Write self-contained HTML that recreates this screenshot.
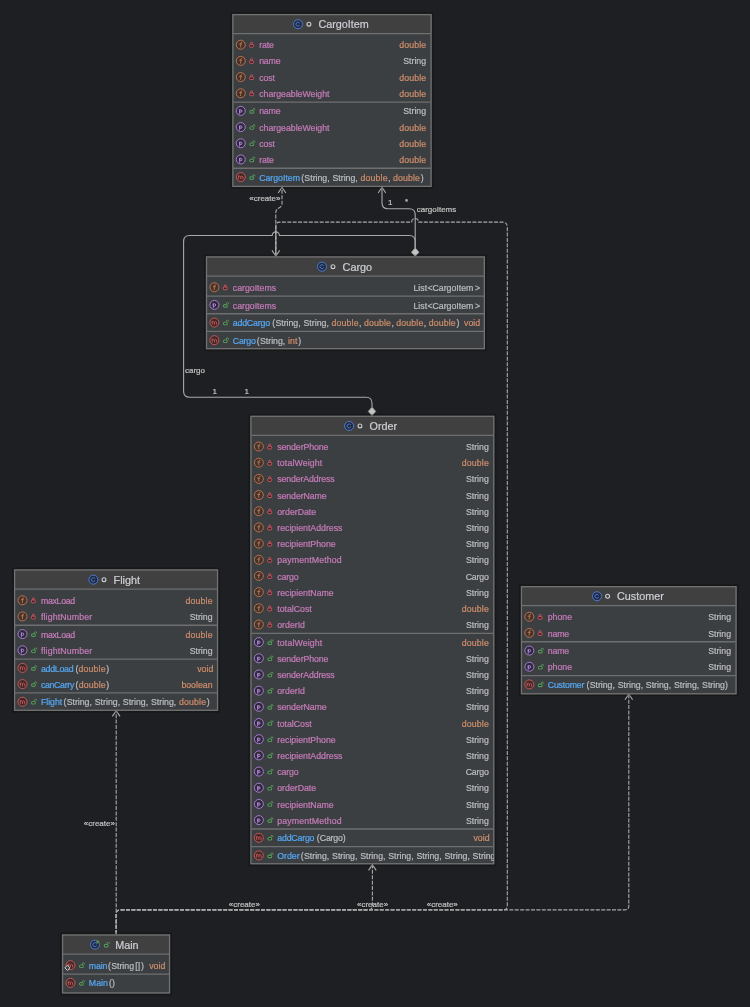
<!DOCTYPE html>
<html><head><meta charset="utf-8"><title>diagram</title>
<style>
html,body{margin:0;padding:0;background:#1e1f22;}
body{width:750px;height:1007px;overflow:hidden;}
svg{display:block;font-family:"Liberation Sans",sans-serif;}
</style></head><body>
<svg width="750" height="1007" viewBox="0 0 750 1007">
<rect width="750" height="1007" fill="#1e1f22"/>
<path d="M116.2,934.2 V711" fill="none" stroke="#a9a9a9" stroke-width="1.1" stroke-dasharray="4 1.4"/>
<path d="M112.40,716.40 L116.20,710.60 L120.00,716.40" fill="none" stroke="#a9a9a9" stroke-width="1.1"/>
<path d="M116.2,934.2 V913.9 Q116.2,909.9 120.2,909.9 H368.4 Q372.4,909.9 372.4,905.9 V865" fill="none" stroke="#a9a9a9" stroke-width="1.1" stroke-dasharray="4 1.4"/>
<path d="M368.60,870.40 L372.40,864.60 L376.20,870.40" fill="none" stroke="#a9a9a9" stroke-width="1.1"/>
<path d="M116.2,934.2 V913.9 Q116.2,909.9 120.2,909.9 H624.8 Q628.8,909.9 628.8,905.9 V694.4" fill="none" stroke="#a9a9a9" stroke-width="1.1" stroke-dasharray="4 1.4"/>
<path d="M625.00,699.80 L628.80,694.00 L632.60,699.80" fill="none" stroke="#a9a9a9" stroke-width="1.1"/>
<path d="M116.2,934.2 V913.9 Q116.2,909.9 120.2,909.9 H503.3 Q507.3,909.9 507.3,905.9 V227.1 Q507.3,222.1 502.3,222.1 H418.8 a3.6,3.6 0 0 0 -7.2,0 H279.8 Q275.8,222.1 275.8,226.1 V256" fill="none" stroke="#a9a9a9" stroke-width="1.1" stroke-dasharray="4 1.4"/>
<path d="M272.00,250.40 L275.80,256.20 L279.60,250.40" fill="none" stroke="#a9a9a9" stroke-width="1.1"/>
<path d="M275.8,226.5 V256" fill="none" stroke="#a9a9a9" stroke-width="1.1"/>
<path d="M275.8,256.2 V212.5 Q275.8,209.5 278.9,208 Q282,206.5 282,203.5 V187.6" fill="none" stroke="#a9a9a9" stroke-width="1.1" stroke-dasharray="4 1.4"/>
<path d="M278.20,193.00 L282.00,187.20 L285.80,193.00" fill="none" stroke="#a9a9a9" stroke-width="1.1"/>
<path d="M415.2,248 V214.7 Q415.2,208.7 409.2,208.7 H388 Q382,208.7 382,202.7 V187.6" fill="none" stroke="#a9a9a9" stroke-width="1.1"/>
<path d="M378.20,193.00 L382.00,187.20 L385.80,193.00" fill="none" stroke="#a9a9a9" stroke-width="1.1"/>
<path d="M372,407 V403.2 Q372,397.2 366,397.2 H189.6 Q183.6,397.2 183.6,391.2 V241.5 Q183.6,235.5 189.6,235.5 H272.2 a3.6,3.6 0 0 1 7.2,0 H409.2 Q415.2,235.5 415.2,241.5 V248" fill="none" stroke="#a9a9a9" stroke-width="1.1"/>
<path d="M415.20,256.40 l3.7,-4.2 l-3.7,-4.2 l-3.7,4.2 z" fill="#c4c4c4" stroke="#a9a9a9" stroke-width="0.8"/>
<path d="M372.00,415.60 l3.7,-4.2 l-3.7,-4.2 l-3.7,4.2 z" fill="#c4c4c4" stroke="#a9a9a9" stroke-width="0.8"/>
<rect x="231.30" y="13.05" width="201.35" height="174.90" fill="none" stroke="#000" stroke-opacity="0.22" stroke-width="1.8"/>
<rect x="232.50" y="14.25" width="198.95" height="172.50" fill="#3c3f41"/>
<rect x="232.50" y="14.25" width="198.95" height="19.35" fill="#404040"/>
<circle cx="298.00" cy="24.20" r="4.5" fill="#222b3f" stroke="#5183ea" stroke-width="0.85"/>
<path d="M299.50,22.90 a2.0,2.0 0 1 0 0,2.6" fill="none" stroke="#5183ea" stroke-width="0.85" stroke-linecap="round" stroke-linejoin="round"/>
<circle cx="308.90" cy="24.20" r="1.95" fill="none" stroke="#ced0d6" stroke-width="1.1"/>
<line x1="233.20" x2="430.75" y1="33.60" y2="33.60" stroke="#6d6f70" stroke-width="1.35"/>
<circle cx="240.75" cy="44.70" r="4.5" fill="#45322b" stroke="#c77d55" stroke-width="0.85"/>
<path d="M241.85,42.40 q-1.2,-0.3 -1.2,0.9 v3.8 M239.55,44.10 h2.1" fill="none" stroke="#c77d55" stroke-width="0.8" stroke-linecap="round" stroke-linejoin="round"/>
<path d="M250.60,44.50 v-1.15 a1,1 0 0 1 2,0 v1.15" fill="none" stroke="#d0555f" stroke-width="0.9"/>
<rect x="249.60" y="44.50" width="4.0" height="2.7" rx="0.9" fill="#35262a" stroke="#d0555f" stroke-width="1.0"/>
<circle cx="240.75" cy="60.88" r="4.5" fill="#45322b" stroke="#c77d55" stroke-width="0.85"/>
<path d="M241.85,58.58 q-1.2,-0.3 -1.2,0.9 v3.8 M239.55,60.28 h2.1" fill="none" stroke="#c77d55" stroke-width="0.8" stroke-linecap="round" stroke-linejoin="round"/>
<path d="M250.60,60.68 v-1.15 a1,1 0 0 1 2,0 v1.15" fill="none" stroke="#d0555f" stroke-width="0.9"/>
<rect x="249.60" y="60.68" width="4.0" height="2.7" rx="0.9" fill="#35262a" stroke="#d0555f" stroke-width="1.0"/>
<circle cx="240.75" cy="77.06" r="4.5" fill="#45322b" stroke="#c77d55" stroke-width="0.85"/>
<path d="M241.85,74.76 q-1.2,-0.3 -1.2,0.9 v3.8 M239.55,76.46 h2.1" fill="none" stroke="#c77d55" stroke-width="0.8" stroke-linecap="round" stroke-linejoin="round"/>
<path d="M250.60,76.86 v-1.15 a1,1 0 0 1 2,0 v1.15" fill="none" stroke="#d0555f" stroke-width="0.9"/>
<rect x="249.60" y="76.86" width="4.0" height="2.7" rx="0.9" fill="#35262a" stroke="#d0555f" stroke-width="1.0"/>
<circle cx="240.75" cy="93.24" r="4.5" fill="#45322b" stroke="#c77d55" stroke-width="0.85"/>
<path d="M241.85,90.94 q-1.2,-0.3 -1.2,0.9 v3.8 M239.55,92.64 h2.1" fill="none" stroke="#c77d55" stroke-width="0.8" stroke-linecap="round" stroke-linejoin="round"/>
<path d="M250.60,93.04 v-1.15 a1,1 0 0 1 2,0 v1.15" fill="none" stroke="#d0555f" stroke-width="0.9"/>
<rect x="249.60" y="93.04" width="4.0" height="2.7" rx="0.9" fill="#35262a" stroke="#d0555f" stroke-width="1.0"/>
<line x1="233.20" x2="430.75" y1="102.09" y2="102.09" stroke="#6d6f70" stroke-width="1.35"/>
<circle cx="240.75" cy="110.89" r="4.5" fill="#2f2936" stroke="#b589ec" stroke-width="0.85"/>
<path d="M239.60,109.59 v4.1 M239.60,110.99 a1.2,1.25 0 1 1 2.4,0 a1.2,1.25 0 1 1 -2.4,0" fill="none" stroke="#b589ec" stroke-width="0.9" stroke-linecap="round" stroke-linejoin="round"/>
<path d="M252.70,110.59 v-0.9 a1.1,1.1 0 0 1 2.2,0 v0.5" fill="none" stroke="#57965c" stroke-width="1.0"/>
<rect x="249.85" y="110.64" width="3.7" height="2.5" rx="1" fill="#25332a" stroke="#57965c" stroke-width="1.1"/>
<circle cx="240.75" cy="127.07" r="4.5" fill="#2f2936" stroke="#b589ec" stroke-width="0.85"/>
<path d="M239.60,125.77 v4.1 M239.60,127.17 a1.2,1.25 0 1 1 2.4,0 a1.2,1.25 0 1 1 -2.4,0" fill="none" stroke="#b589ec" stroke-width="0.9" stroke-linecap="round" stroke-linejoin="round"/>
<path d="M252.70,126.77 v-0.9 a1.1,1.1 0 0 1 2.2,0 v0.5" fill="none" stroke="#57965c" stroke-width="1.0"/>
<rect x="249.85" y="126.82" width="3.7" height="2.5" rx="1" fill="#25332a" stroke="#57965c" stroke-width="1.1"/>
<circle cx="240.75" cy="143.25" r="4.5" fill="#2f2936" stroke="#b589ec" stroke-width="0.85"/>
<path d="M239.60,141.95 v4.1 M239.60,143.35 a1.2,1.25 0 1 1 2.4,0 a1.2,1.25 0 1 1 -2.4,0" fill="none" stroke="#b589ec" stroke-width="0.9" stroke-linecap="round" stroke-linejoin="round"/>
<path d="M252.70,142.95 v-0.9 a1.1,1.1 0 0 1 2.2,0 v0.5" fill="none" stroke="#57965c" stroke-width="1.0"/>
<rect x="249.85" y="143.00" width="3.7" height="2.5" rx="1" fill="#25332a" stroke="#57965c" stroke-width="1.1"/>
<circle cx="240.75" cy="159.43" r="4.5" fill="#2f2936" stroke="#b589ec" stroke-width="0.85"/>
<path d="M239.60,158.13 v4.1 M239.60,159.53 a1.2,1.25 0 1 1 2.4,0 a1.2,1.25 0 1 1 -2.4,0" fill="none" stroke="#b589ec" stroke-width="0.9" stroke-linecap="round" stroke-linejoin="round"/>
<path d="M252.70,159.13 v-0.9 a1.1,1.1 0 0 1 2.2,0 v0.5" fill="none" stroke="#57965c" stroke-width="1.0"/>
<rect x="249.85" y="159.18" width="3.7" height="2.5" rx="1" fill="#25332a" stroke="#57965c" stroke-width="1.1"/>
<line x1="233.20" x2="430.75" y1="168.28" y2="168.28" stroke="#6d6f70" stroke-width="1.35"/>
<circle cx="240.75" cy="177.08" r="4.5" fill="#402929" stroke="#db5c5c" stroke-width="0.85"/>
<path d="M238.55,178.88 v-3.1 M238.55,176.88 q1.1,-1.8 2.2,0 v2.0 M240.75,176.88 q1.1,-1.8 2.2,0 v2.0" fill="none" stroke="#db5c5c" stroke-width="0.8" stroke-linecap="round" stroke-linejoin="round"/>
<path d="M252.70,176.78 v-0.9 a1.1,1.1 0 0 1 2.2,0 v0.5" fill="none" stroke="#57965c" stroke-width="1.0"/>
<rect x="249.85" y="176.83" width="3.7" height="2.5" rx="1" fill="#25332a" stroke="#57965c" stroke-width="1.1"/>
<rect x="232.85" y="14.60" width="198.25" height="171.80" fill="none" stroke="#727272" stroke-width="1.3"/>
<rect x="204.95" y="255.40" width="280.95" height="94.85" fill="none" stroke="#000" stroke-opacity="0.22" stroke-width="1.8"/>
<rect x="206.15" y="256.60" width="278.55" height="92.45" fill="#3c3f41"/>
<rect x="206.15" y="256.60" width="278.55" height="19.55" fill="#404040"/>
<circle cx="322.00" cy="266.65" r="4.5" fill="#222b3f" stroke="#5183ea" stroke-width="0.85"/>
<path d="M323.50,265.35 a2.0,2.0 0 1 0 0,2.6" fill="none" stroke="#5183ea" stroke-width="0.85" stroke-linecap="round" stroke-linejoin="round"/>
<circle cx="333.00" cy="266.65" r="1.95" fill="none" stroke="#ced0d6" stroke-width="1.1"/>
<line x1="206.85" x2="484.00" y1="276.15" y2="276.15" stroke="#6d6f70" stroke-width="1.35"/>
<circle cx="214.40" cy="287.25" r="4.5" fill="#45322b" stroke="#c77d55" stroke-width="0.85"/>
<path d="M215.50,284.95 q-1.2,-0.3 -1.2,0.9 v3.8 M213.20,286.65 h2.1" fill="none" stroke="#c77d55" stroke-width="0.8" stroke-linecap="round" stroke-linejoin="round"/>
<path d="M224.25,287.05 v-1.15 a1,1 0 0 1 2,0 v1.15" fill="none" stroke="#d0555f" stroke-width="0.9"/>
<rect x="223.25" y="287.05" width="4.0" height="2.7" rx="0.9" fill="#35262a" stroke="#d0555f" stroke-width="1.0"/>
<line x1="206.85" x2="484.00" y1="296.10" y2="296.10" stroke="#6d6f70" stroke-width="1.35"/>
<circle cx="214.40" cy="304.90" r="4.5" fill="#2f2936" stroke="#b589ec" stroke-width="0.85"/>
<path d="M213.25,303.60 v4.1 M213.25,305.00 a1.2,1.25 0 1 1 2.4,0 a1.2,1.25 0 1 1 -2.4,0" fill="none" stroke="#b589ec" stroke-width="0.9" stroke-linecap="round" stroke-linejoin="round"/>
<path d="M226.35,304.60 v-0.9 a1.1,1.1 0 0 1 2.2,0 v0.5" fill="none" stroke="#57965c" stroke-width="1.0"/>
<rect x="223.50" y="304.65" width="3.7" height="2.5" rx="1" fill="#25332a" stroke="#57965c" stroke-width="1.1"/>
<line x1="206.85" x2="484.00" y1="313.75" y2="313.75" stroke="#6d6f70" stroke-width="1.35"/>
<circle cx="214.40" cy="322.55" r="4.5" fill="#402929" stroke="#db5c5c" stroke-width="0.85"/>
<path d="M212.20,324.35 v-3.1 M212.20,322.35 q1.1,-1.8 2.2,0 v2.0 M214.40,322.35 q1.1,-1.8 2.2,0 v2.0" fill="none" stroke="#db5c5c" stroke-width="0.8" stroke-linecap="round" stroke-linejoin="round"/>
<path d="M226.35,322.25 v-0.9 a1.1,1.1 0 0 1 2.2,0 v0.5" fill="none" stroke="#57965c" stroke-width="1.0"/>
<rect x="223.50" y="322.30" width="3.7" height="2.5" rx="1" fill="#25332a" stroke="#57965c" stroke-width="1.1"/>
<line x1="206.85" x2="484.00" y1="331.40" y2="331.40" stroke="#6d6f70" stroke-width="1.35"/>
<circle cx="214.40" cy="340.20" r="4.5" fill="#402929" stroke="#db5c5c" stroke-width="0.85"/>
<path d="M212.20,342.00 v-3.1 M212.20,340.00 q1.1,-1.8 2.2,0 v2.0 M214.40,340.00 q1.1,-1.8 2.2,0 v2.0" fill="none" stroke="#db5c5c" stroke-width="0.8" stroke-linecap="round" stroke-linejoin="round"/>
<path d="M226.35,339.90 v-0.9 a1.1,1.1 0 0 1 2.2,0 v0.5" fill="none" stroke="#57965c" stroke-width="1.0"/>
<rect x="223.50" y="339.95" width="3.7" height="2.5" rx="1" fill="#25332a" stroke="#57965c" stroke-width="1.1"/>
<rect x="206.50" y="256.95" width="277.85" height="91.75" fill="none" stroke="#727272" stroke-width="1.3"/>
<rect x="249.40" y="414.75" width="245.95" height="450.55" fill="none" stroke="#000" stroke-opacity="0.22" stroke-width="1.8"/>
<rect x="250.60" y="415.95" width="243.55" height="448.15" fill="#3c3f41"/>
<rect x="250.60" y="415.95" width="243.55" height="19.45" fill="#404040"/>
<circle cx="349.10" cy="425.95" r="4.5" fill="#222b3f" stroke="#5183ea" stroke-width="0.85"/>
<path d="M350.60,424.65 a2.0,2.0 0 1 0 0,2.6" fill="none" stroke="#5183ea" stroke-width="0.85" stroke-linecap="round" stroke-linejoin="round"/>
<circle cx="360.00" cy="425.95" r="1.95" fill="none" stroke="#ced0d6" stroke-width="1.1"/>
<clipPath id="clipOrder"><rect x="250.3" y="415.65" width="243.45" height="448.75"/></clipPath><g clip-path="url(#clipOrder)">
<line x1="251.30" x2="493.45" y1="435.40" y2="435.40" stroke="#6d6f70" stroke-width="1.35"/>
<circle cx="258.85" cy="446.50" r="4.5" fill="#45322b" stroke="#c77d55" stroke-width="0.85"/>
<path d="M259.95,444.20 q-1.2,-0.3 -1.2,0.9 v3.8 M257.65,445.90 h2.1" fill="none" stroke="#c77d55" stroke-width="0.8" stroke-linecap="round" stroke-linejoin="round"/>
<path d="M268.70,446.30 v-1.15 a1,1 0 0 1 2,0 v1.15" fill="none" stroke="#d0555f" stroke-width="0.9"/>
<rect x="267.70" y="446.30" width="4.0" height="2.7" rx="0.9" fill="#35262a" stroke="#d0555f" stroke-width="1.0"/>
<circle cx="258.85" cy="462.68" r="4.5" fill="#45322b" stroke="#c77d55" stroke-width="0.85"/>
<path d="M259.95,460.38 q-1.2,-0.3 -1.2,0.9 v3.8 M257.65,462.08 h2.1" fill="none" stroke="#c77d55" stroke-width="0.8" stroke-linecap="round" stroke-linejoin="round"/>
<path d="M268.70,462.48 v-1.15 a1,1 0 0 1 2,0 v1.15" fill="none" stroke="#d0555f" stroke-width="0.9"/>
<rect x="267.70" y="462.48" width="4.0" height="2.7" rx="0.9" fill="#35262a" stroke="#d0555f" stroke-width="1.0"/>
<circle cx="258.85" cy="478.86" r="4.5" fill="#45322b" stroke="#c77d55" stroke-width="0.85"/>
<path d="M259.95,476.56 q-1.2,-0.3 -1.2,0.9 v3.8 M257.65,478.26 h2.1" fill="none" stroke="#c77d55" stroke-width="0.8" stroke-linecap="round" stroke-linejoin="round"/>
<path d="M268.70,478.66 v-1.15 a1,1 0 0 1 2,0 v1.15" fill="none" stroke="#d0555f" stroke-width="0.9"/>
<rect x="267.70" y="478.66" width="4.0" height="2.7" rx="0.9" fill="#35262a" stroke="#d0555f" stroke-width="1.0"/>
<circle cx="258.85" cy="495.04" r="4.5" fill="#45322b" stroke="#c77d55" stroke-width="0.85"/>
<path d="M259.95,492.74 q-1.2,-0.3 -1.2,0.9 v3.8 M257.65,494.44 h2.1" fill="none" stroke="#c77d55" stroke-width="0.8" stroke-linecap="round" stroke-linejoin="round"/>
<path d="M268.70,494.84 v-1.15 a1,1 0 0 1 2,0 v1.15" fill="none" stroke="#d0555f" stroke-width="0.9"/>
<rect x="267.70" y="494.84" width="4.0" height="2.7" rx="0.9" fill="#35262a" stroke="#d0555f" stroke-width="1.0"/>
<circle cx="258.85" cy="511.22" r="4.5" fill="#45322b" stroke="#c77d55" stroke-width="0.85"/>
<path d="M259.95,508.92 q-1.2,-0.3 -1.2,0.9 v3.8 M257.65,510.62 h2.1" fill="none" stroke="#c77d55" stroke-width="0.8" stroke-linecap="round" stroke-linejoin="round"/>
<path d="M268.70,511.02 v-1.15 a1,1 0 0 1 2,0 v1.15" fill="none" stroke="#d0555f" stroke-width="0.9"/>
<rect x="267.70" y="511.02" width="4.0" height="2.7" rx="0.9" fill="#35262a" stroke="#d0555f" stroke-width="1.0"/>
<circle cx="258.85" cy="527.40" r="4.5" fill="#45322b" stroke="#c77d55" stroke-width="0.85"/>
<path d="M259.95,525.10 q-1.2,-0.3 -1.2,0.9 v3.8 M257.65,526.80 h2.1" fill="none" stroke="#c77d55" stroke-width="0.8" stroke-linecap="round" stroke-linejoin="round"/>
<path d="M268.70,527.20 v-1.15 a1,1 0 0 1 2,0 v1.15" fill="none" stroke="#d0555f" stroke-width="0.9"/>
<rect x="267.70" y="527.20" width="4.0" height="2.7" rx="0.9" fill="#35262a" stroke="#d0555f" stroke-width="1.0"/>
<circle cx="258.85" cy="543.58" r="4.5" fill="#45322b" stroke="#c77d55" stroke-width="0.85"/>
<path d="M259.95,541.28 q-1.2,-0.3 -1.2,0.9 v3.8 M257.65,542.98 h2.1" fill="none" stroke="#c77d55" stroke-width="0.8" stroke-linecap="round" stroke-linejoin="round"/>
<path d="M268.70,543.38 v-1.15 a1,1 0 0 1 2,0 v1.15" fill="none" stroke="#d0555f" stroke-width="0.9"/>
<rect x="267.70" y="543.38" width="4.0" height="2.7" rx="0.9" fill="#35262a" stroke="#d0555f" stroke-width="1.0"/>
<circle cx="258.85" cy="559.76" r="4.5" fill="#45322b" stroke="#c77d55" stroke-width="0.85"/>
<path d="M259.95,557.46 q-1.2,-0.3 -1.2,0.9 v3.8 M257.65,559.16 h2.1" fill="none" stroke="#c77d55" stroke-width="0.8" stroke-linecap="round" stroke-linejoin="round"/>
<path d="M268.70,559.56 v-1.15 a1,1 0 0 1 2,0 v1.15" fill="none" stroke="#d0555f" stroke-width="0.9"/>
<rect x="267.70" y="559.56" width="4.0" height="2.7" rx="0.9" fill="#35262a" stroke="#d0555f" stroke-width="1.0"/>
<circle cx="258.85" cy="575.94" r="4.5" fill="#45322b" stroke="#c77d55" stroke-width="0.85"/>
<path d="M259.95,573.64 q-1.2,-0.3 -1.2,0.9 v3.8 M257.65,575.34 h2.1" fill="none" stroke="#c77d55" stroke-width="0.8" stroke-linecap="round" stroke-linejoin="round"/>
<path d="M268.70,575.74 v-1.15 a1,1 0 0 1 2,0 v1.15" fill="none" stroke="#d0555f" stroke-width="0.9"/>
<rect x="267.70" y="575.74" width="4.0" height="2.7" rx="0.9" fill="#35262a" stroke="#d0555f" stroke-width="1.0"/>
<circle cx="258.85" cy="592.12" r="4.5" fill="#45322b" stroke="#c77d55" stroke-width="0.85"/>
<path d="M259.95,589.82 q-1.2,-0.3 -1.2,0.9 v3.8 M257.65,591.52 h2.1" fill="none" stroke="#c77d55" stroke-width="0.8" stroke-linecap="round" stroke-linejoin="round"/>
<path d="M268.70,591.92 v-1.15 a1,1 0 0 1 2,0 v1.15" fill="none" stroke="#d0555f" stroke-width="0.9"/>
<rect x="267.70" y="591.92" width="4.0" height="2.7" rx="0.9" fill="#35262a" stroke="#d0555f" stroke-width="1.0"/>
<circle cx="258.85" cy="608.30" r="4.5" fill="#45322b" stroke="#c77d55" stroke-width="0.85"/>
<path d="M259.95,606.00 q-1.2,-0.3 -1.2,0.9 v3.8 M257.65,607.70 h2.1" fill="none" stroke="#c77d55" stroke-width="0.8" stroke-linecap="round" stroke-linejoin="round"/>
<path d="M268.70,608.10 v-1.15 a1,1 0 0 1 2,0 v1.15" fill="none" stroke="#d0555f" stroke-width="0.9"/>
<rect x="267.70" y="608.10" width="4.0" height="2.7" rx="0.9" fill="#35262a" stroke="#d0555f" stroke-width="1.0"/>
<circle cx="258.85" cy="624.48" r="4.5" fill="#45322b" stroke="#c77d55" stroke-width="0.85"/>
<path d="M259.95,622.18 q-1.2,-0.3 -1.2,0.9 v3.8 M257.65,623.88 h2.1" fill="none" stroke="#c77d55" stroke-width="0.8" stroke-linecap="round" stroke-linejoin="round"/>
<path d="M268.70,624.28 v-1.15 a1,1 0 0 1 2,0 v1.15" fill="none" stroke="#d0555f" stroke-width="0.9"/>
<rect x="267.70" y="624.28" width="4.0" height="2.7" rx="0.9" fill="#35262a" stroke="#d0555f" stroke-width="1.0"/>
<line x1="251.30" x2="493.45" y1="633.33" y2="633.33" stroke="#6d6f70" stroke-width="1.35"/>
<circle cx="258.85" cy="642.13" r="4.5" fill="#2f2936" stroke="#b589ec" stroke-width="0.85"/>
<path d="M257.70,640.83 v4.1 M257.70,642.23 a1.2,1.25 0 1 1 2.4,0 a1.2,1.25 0 1 1 -2.4,0" fill="none" stroke="#b589ec" stroke-width="0.9" stroke-linecap="round" stroke-linejoin="round"/>
<path d="M270.80,641.83 v-0.9 a1.1,1.1 0 0 1 2.2,0 v0.5" fill="none" stroke="#57965c" stroke-width="1.0"/>
<rect x="267.95" y="641.88" width="3.7" height="2.5" rx="1" fill="#25332a" stroke="#57965c" stroke-width="1.1"/>
<circle cx="258.85" cy="658.31" r="4.5" fill="#2f2936" stroke="#b589ec" stroke-width="0.85"/>
<path d="M257.70,657.01 v4.1 M257.70,658.41 a1.2,1.25 0 1 1 2.4,0 a1.2,1.25 0 1 1 -2.4,0" fill="none" stroke="#b589ec" stroke-width="0.9" stroke-linecap="round" stroke-linejoin="round"/>
<path d="M270.80,658.01 v-0.9 a1.1,1.1 0 0 1 2.2,0 v0.5" fill="none" stroke="#57965c" stroke-width="1.0"/>
<rect x="267.95" y="658.06" width="3.7" height="2.5" rx="1" fill="#25332a" stroke="#57965c" stroke-width="1.1"/>
<circle cx="258.85" cy="674.49" r="4.5" fill="#2f2936" stroke="#b589ec" stroke-width="0.85"/>
<path d="M257.70,673.19 v4.1 M257.70,674.59 a1.2,1.25 0 1 1 2.4,0 a1.2,1.25 0 1 1 -2.4,0" fill="none" stroke="#b589ec" stroke-width="0.9" stroke-linecap="round" stroke-linejoin="round"/>
<path d="M270.80,674.19 v-0.9 a1.1,1.1 0 0 1 2.2,0 v0.5" fill="none" stroke="#57965c" stroke-width="1.0"/>
<rect x="267.95" y="674.24" width="3.7" height="2.5" rx="1" fill="#25332a" stroke="#57965c" stroke-width="1.1"/>
<circle cx="258.85" cy="690.67" r="4.5" fill="#2f2936" stroke="#b589ec" stroke-width="0.85"/>
<path d="M257.70,689.37 v4.1 M257.70,690.77 a1.2,1.25 0 1 1 2.4,0 a1.2,1.25 0 1 1 -2.4,0" fill="none" stroke="#b589ec" stroke-width="0.9" stroke-linecap="round" stroke-linejoin="round"/>
<path d="M270.80,690.37 v-0.9 a1.1,1.1 0 0 1 2.2,0 v0.5" fill="none" stroke="#57965c" stroke-width="1.0"/>
<rect x="267.95" y="690.42" width="3.7" height="2.5" rx="1" fill="#25332a" stroke="#57965c" stroke-width="1.1"/>
<circle cx="258.85" cy="706.85" r="4.5" fill="#2f2936" stroke="#b589ec" stroke-width="0.85"/>
<path d="M257.70,705.55 v4.1 M257.70,706.95 a1.2,1.25 0 1 1 2.4,0 a1.2,1.25 0 1 1 -2.4,0" fill="none" stroke="#b589ec" stroke-width="0.9" stroke-linecap="round" stroke-linejoin="round"/>
<path d="M270.80,706.55 v-0.9 a1.1,1.1 0 0 1 2.2,0 v0.5" fill="none" stroke="#57965c" stroke-width="1.0"/>
<rect x="267.95" y="706.60" width="3.7" height="2.5" rx="1" fill="#25332a" stroke="#57965c" stroke-width="1.1"/>
<circle cx="258.85" cy="723.03" r="4.5" fill="#2f2936" stroke="#b589ec" stroke-width="0.85"/>
<path d="M257.70,721.73 v4.1 M257.70,723.13 a1.2,1.25 0 1 1 2.4,0 a1.2,1.25 0 1 1 -2.4,0" fill="none" stroke="#b589ec" stroke-width="0.9" stroke-linecap="round" stroke-linejoin="round"/>
<path d="M270.80,722.73 v-0.9 a1.1,1.1 0 0 1 2.2,0 v0.5" fill="none" stroke="#57965c" stroke-width="1.0"/>
<rect x="267.95" y="722.78" width="3.7" height="2.5" rx="1" fill="#25332a" stroke="#57965c" stroke-width="1.1"/>
<circle cx="258.85" cy="739.21" r="4.5" fill="#2f2936" stroke="#b589ec" stroke-width="0.85"/>
<path d="M257.70,737.91 v4.1 M257.70,739.31 a1.2,1.25 0 1 1 2.4,0 a1.2,1.25 0 1 1 -2.4,0" fill="none" stroke="#b589ec" stroke-width="0.9" stroke-linecap="round" stroke-linejoin="round"/>
<path d="M270.80,738.91 v-0.9 a1.1,1.1 0 0 1 2.2,0 v0.5" fill="none" stroke="#57965c" stroke-width="1.0"/>
<rect x="267.95" y="738.96" width="3.7" height="2.5" rx="1" fill="#25332a" stroke="#57965c" stroke-width="1.1"/>
<circle cx="258.85" cy="755.39" r="4.5" fill="#2f2936" stroke="#b589ec" stroke-width="0.85"/>
<path d="M257.70,754.09 v4.1 M257.70,755.49 a1.2,1.25 0 1 1 2.4,0 a1.2,1.25 0 1 1 -2.4,0" fill="none" stroke="#b589ec" stroke-width="0.9" stroke-linecap="round" stroke-linejoin="round"/>
<path d="M270.80,755.09 v-0.9 a1.1,1.1 0 0 1 2.2,0 v0.5" fill="none" stroke="#57965c" stroke-width="1.0"/>
<rect x="267.95" y="755.14" width="3.7" height="2.5" rx="1" fill="#25332a" stroke="#57965c" stroke-width="1.1"/>
<circle cx="258.85" cy="771.57" r="4.5" fill="#2f2936" stroke="#b589ec" stroke-width="0.85"/>
<path d="M257.70,770.27 v4.1 M257.70,771.67 a1.2,1.25 0 1 1 2.4,0 a1.2,1.25 0 1 1 -2.4,0" fill="none" stroke="#b589ec" stroke-width="0.9" stroke-linecap="round" stroke-linejoin="round"/>
<path d="M270.80,771.27 v-0.9 a1.1,1.1 0 0 1 2.2,0 v0.5" fill="none" stroke="#57965c" stroke-width="1.0"/>
<rect x="267.95" y="771.32" width="3.7" height="2.5" rx="1" fill="#25332a" stroke="#57965c" stroke-width="1.1"/>
<circle cx="258.85" cy="787.75" r="4.5" fill="#2f2936" stroke="#b589ec" stroke-width="0.85"/>
<path d="M257.70,786.45 v4.1 M257.70,787.85 a1.2,1.25 0 1 1 2.4,0 a1.2,1.25 0 1 1 -2.4,0" fill="none" stroke="#b589ec" stroke-width="0.9" stroke-linecap="round" stroke-linejoin="round"/>
<path d="M270.80,787.45 v-0.9 a1.1,1.1 0 0 1 2.2,0 v0.5" fill="none" stroke="#57965c" stroke-width="1.0"/>
<rect x="267.95" y="787.50" width="3.7" height="2.5" rx="1" fill="#25332a" stroke="#57965c" stroke-width="1.1"/>
<circle cx="258.85" cy="803.93" r="4.5" fill="#2f2936" stroke="#b589ec" stroke-width="0.85"/>
<path d="M257.70,802.63 v4.1 M257.70,804.03 a1.2,1.25 0 1 1 2.4,0 a1.2,1.25 0 1 1 -2.4,0" fill="none" stroke="#b589ec" stroke-width="0.9" stroke-linecap="round" stroke-linejoin="round"/>
<path d="M270.80,803.63 v-0.9 a1.1,1.1 0 0 1 2.2,0 v0.5" fill="none" stroke="#57965c" stroke-width="1.0"/>
<rect x="267.95" y="803.68" width="3.7" height="2.5" rx="1" fill="#25332a" stroke="#57965c" stroke-width="1.1"/>
<circle cx="258.85" cy="820.11" r="4.5" fill="#2f2936" stroke="#b589ec" stroke-width="0.85"/>
<path d="M257.70,818.81 v4.1 M257.70,820.21 a1.2,1.25 0 1 1 2.4,0 a1.2,1.25 0 1 1 -2.4,0" fill="none" stroke="#b589ec" stroke-width="0.9" stroke-linecap="round" stroke-linejoin="round"/>
<path d="M270.80,819.81 v-0.9 a1.1,1.1 0 0 1 2.2,0 v0.5" fill="none" stroke="#57965c" stroke-width="1.0"/>
<rect x="267.95" y="819.86" width="3.7" height="2.5" rx="1" fill="#25332a" stroke="#57965c" stroke-width="1.1"/>
<line x1="251.30" x2="493.45" y1="828.96" y2="828.96" stroke="#6d6f70" stroke-width="1.35"/>
<circle cx="258.85" cy="837.76" r="4.5" fill="#402929" stroke="#db5c5c" stroke-width="0.85"/>
<path d="M256.65,839.56 v-3.1 M256.65,837.56 q1.1,-1.8 2.2,0 v2.0 M258.85,837.56 q1.1,-1.8 2.2,0 v2.0" fill="none" stroke="#db5c5c" stroke-width="0.8" stroke-linecap="round" stroke-linejoin="round"/>
<path d="M270.80,837.46 v-0.9 a1.1,1.1 0 0 1 2.2,0 v0.5" fill="none" stroke="#57965c" stroke-width="1.0"/>
<rect x="267.95" y="837.51" width="3.7" height="2.5" rx="1" fill="#25332a" stroke="#57965c" stroke-width="1.1"/>
<line x1="251.30" x2="493.45" y1="846.61" y2="846.61" stroke="#6d6f70" stroke-width="1.35"/>
<circle cx="258.85" cy="855.41" r="4.5" fill="#402929" stroke="#db5c5c" stroke-width="0.85"/>
<path d="M256.65,857.21 v-3.1 M256.65,855.21 q1.1,-1.8 2.2,0 v2.0 M258.85,855.21 q1.1,-1.8 2.2,0 v2.0" fill="none" stroke="#db5c5c" stroke-width="0.8" stroke-linecap="round" stroke-linejoin="round"/>
<path d="M270.80,855.11 v-0.9 a1.1,1.1 0 0 1 2.2,0 v0.5" fill="none" stroke="#57965c" stroke-width="1.0"/>
<rect x="267.95" y="855.16" width="3.7" height="2.5" rx="1" fill="#25332a" stroke="#57965c" stroke-width="1.1"/>
</g>
<rect x="250.95" y="416.30" width="242.85" height="447.45" fill="none" stroke="#727272" stroke-width="1.3"/>
<rect x="13.05" y="568.40" width="206.05" height="143.45" fill="none" stroke="#000" stroke-opacity="0.22" stroke-width="1.8"/>
<rect x="14.25" y="569.60" width="203.65" height="141.05" fill="#3c3f41"/>
<rect x="14.25" y="569.60" width="203.65" height="19.55" fill="#404040"/>
<circle cx="93.40" cy="579.65" r="4.5" fill="#222b3f" stroke="#5183ea" stroke-width="0.85"/>
<path d="M94.90,578.35 a2.0,2.0 0 1 0 0,2.6" fill="none" stroke="#5183ea" stroke-width="0.85" stroke-linecap="round" stroke-linejoin="round"/>
<circle cx="104.00" cy="579.65" r="1.95" fill="none" stroke="#ced0d6" stroke-width="1.1"/>
<line x1="14.95" x2="217.20" y1="589.15" y2="589.15" stroke="#6d6f70" stroke-width="1.35"/>
<circle cx="22.50" cy="600.25" r="4.5" fill="#45322b" stroke="#c77d55" stroke-width="0.85"/>
<path d="M23.60,597.95 q-1.2,-0.3 -1.2,0.9 v3.8 M21.30,599.65 h2.1" fill="none" stroke="#c77d55" stroke-width="0.8" stroke-linecap="round" stroke-linejoin="round"/>
<path d="M32.35,600.05 v-1.15 a1,1 0 0 1 2,0 v1.15" fill="none" stroke="#d0555f" stroke-width="0.9"/>
<rect x="31.35" y="600.05" width="4.0" height="2.7" rx="0.9" fill="#35262a" stroke="#d0555f" stroke-width="1.0"/>
<circle cx="22.50" cy="616.43" r="4.5" fill="#45322b" stroke="#c77d55" stroke-width="0.85"/>
<path d="M23.60,614.13 q-1.2,-0.3 -1.2,0.9 v3.8 M21.30,615.83 h2.1" fill="none" stroke="#c77d55" stroke-width="0.8" stroke-linecap="round" stroke-linejoin="round"/>
<path d="M32.35,616.23 v-1.15 a1,1 0 0 1 2,0 v1.15" fill="none" stroke="#d0555f" stroke-width="0.9"/>
<rect x="31.35" y="616.23" width="4.0" height="2.7" rx="0.9" fill="#35262a" stroke="#d0555f" stroke-width="1.0"/>
<line x1="14.95" x2="217.20" y1="625.28" y2="625.28" stroke="#6d6f70" stroke-width="1.35"/>
<circle cx="22.50" cy="634.08" r="4.5" fill="#2f2936" stroke="#b589ec" stroke-width="0.85"/>
<path d="M21.35,632.78 v4.1 M21.35,634.18 a1.2,1.25 0 1 1 2.4,0 a1.2,1.25 0 1 1 -2.4,0" fill="none" stroke="#b589ec" stroke-width="0.9" stroke-linecap="round" stroke-linejoin="round"/>
<path d="M34.45,633.78 v-0.9 a1.1,1.1 0 0 1 2.2,0 v0.5" fill="none" stroke="#57965c" stroke-width="1.0"/>
<rect x="31.60" y="633.83" width="3.7" height="2.5" rx="1" fill="#25332a" stroke="#57965c" stroke-width="1.1"/>
<circle cx="22.50" cy="650.26" r="4.5" fill="#2f2936" stroke="#b589ec" stroke-width="0.85"/>
<path d="M21.35,648.96 v4.1 M21.35,650.36 a1.2,1.25 0 1 1 2.4,0 a1.2,1.25 0 1 1 -2.4,0" fill="none" stroke="#b589ec" stroke-width="0.9" stroke-linecap="round" stroke-linejoin="round"/>
<path d="M34.45,649.96 v-0.9 a1.1,1.1 0 0 1 2.2,0 v0.5" fill="none" stroke="#57965c" stroke-width="1.0"/>
<rect x="31.60" y="650.01" width="3.7" height="2.5" rx="1" fill="#25332a" stroke="#57965c" stroke-width="1.1"/>
<line x1="14.95" x2="217.20" y1="659.11" y2="659.11" stroke="#6d6f70" stroke-width="1.35"/>
<circle cx="22.50" cy="667.91" r="4.5" fill="#402929" stroke="#db5c5c" stroke-width="0.85"/>
<path d="M20.30,669.71 v-3.1 M20.30,667.71 q1.1,-1.8 2.2,0 v2.0 M22.50,667.71 q1.1,-1.8 2.2,0 v2.0" fill="none" stroke="#db5c5c" stroke-width="0.8" stroke-linecap="round" stroke-linejoin="round"/>
<path d="M34.45,667.61 v-0.9 a1.1,1.1 0 0 1 2.2,0 v0.5" fill="none" stroke="#57965c" stroke-width="1.0"/>
<rect x="31.60" y="667.66" width="3.7" height="2.5" rx="1" fill="#25332a" stroke="#57965c" stroke-width="1.1"/>
<circle cx="22.50" cy="684.09" r="4.5" fill="#402929" stroke="#db5c5c" stroke-width="0.85"/>
<path d="M20.30,685.89 v-3.1 M20.30,683.89 q1.1,-1.8 2.2,0 v2.0 M22.50,683.89 q1.1,-1.8 2.2,0 v2.0" fill="none" stroke="#db5c5c" stroke-width="0.8" stroke-linecap="round" stroke-linejoin="round"/>
<path d="M34.45,683.79 v-0.9 a1.1,1.1 0 0 1 2.2,0 v0.5" fill="none" stroke="#57965c" stroke-width="1.0"/>
<rect x="31.60" y="683.84" width="3.7" height="2.5" rx="1" fill="#25332a" stroke="#57965c" stroke-width="1.1"/>
<line x1="14.95" x2="217.20" y1="692.94" y2="692.94" stroke="#6d6f70" stroke-width="1.35"/>
<circle cx="22.50" cy="701.74" r="4.5" fill="#402929" stroke="#db5c5c" stroke-width="0.85"/>
<path d="M20.30,703.54 v-3.1 M20.30,701.54 q1.1,-1.8 2.2,0 v2.0 M22.50,701.54 q1.1,-1.8 2.2,0 v2.0" fill="none" stroke="#db5c5c" stroke-width="0.8" stroke-linecap="round" stroke-linejoin="round"/>
<path d="M34.45,701.44 v-0.9 a1.1,1.1 0 0 1 2.2,0 v0.5" fill="none" stroke="#57965c" stroke-width="1.0"/>
<rect x="31.60" y="701.49" width="3.7" height="2.5" rx="1" fill="#25332a" stroke="#57965c" stroke-width="1.1"/>
<rect x="14.60" y="569.95" width="202.95" height="140.35" fill="none" stroke="#727272" stroke-width="1.3"/>
<rect x="519.90" y="585.15" width="217.70" height="110.20" fill="none" stroke="#000" stroke-opacity="0.22" stroke-width="1.8"/>
<rect x="521.10" y="586.35" width="215.30" height="107.80" fill="#3c3f41"/>
<rect x="521.10" y="586.35" width="215.30" height="19.30" fill="#404040"/>
<circle cx="597.00" cy="596.27" r="4.5" fill="#222b3f" stroke="#5183ea" stroke-width="0.85"/>
<path d="M598.50,594.98 a2.0,2.0 0 1 0 0,2.6" fill="none" stroke="#5183ea" stroke-width="0.85" stroke-linecap="round" stroke-linejoin="round"/>
<circle cx="607.60" cy="596.27" r="1.95" fill="none" stroke="#ced0d6" stroke-width="1.1"/>
<line x1="521.80" x2="735.70" y1="605.65" y2="605.65" stroke="#6d6f70" stroke-width="1.35"/>
<circle cx="529.35" cy="616.75" r="4.5" fill="#45322b" stroke="#c77d55" stroke-width="0.85"/>
<path d="M530.45,614.45 q-1.2,-0.3 -1.2,0.9 v3.8 M528.15,616.15 h2.1" fill="none" stroke="#c77d55" stroke-width="0.8" stroke-linecap="round" stroke-linejoin="round"/>
<path d="M539.20,616.55 v-1.15 a1,1 0 0 1 2,0 v1.15" fill="none" stroke="#d0555f" stroke-width="0.9"/>
<rect x="538.20" y="616.55" width="4.0" height="2.7" rx="0.9" fill="#35262a" stroke="#d0555f" stroke-width="1.0"/>
<circle cx="529.35" cy="632.93" r="4.5" fill="#45322b" stroke="#c77d55" stroke-width="0.85"/>
<path d="M530.45,630.63 q-1.2,-0.3 -1.2,0.9 v3.8 M528.15,632.33 h2.1" fill="none" stroke="#c77d55" stroke-width="0.8" stroke-linecap="round" stroke-linejoin="round"/>
<path d="M539.20,632.73 v-1.15 a1,1 0 0 1 2,0 v1.15" fill="none" stroke="#d0555f" stroke-width="0.9"/>
<rect x="538.20" y="632.73" width="4.0" height="2.7" rx="0.9" fill="#35262a" stroke="#d0555f" stroke-width="1.0"/>
<line x1="521.80" x2="735.70" y1="641.78" y2="641.78" stroke="#6d6f70" stroke-width="1.35"/>
<circle cx="529.35" cy="650.58" r="4.5" fill="#2f2936" stroke="#b589ec" stroke-width="0.85"/>
<path d="M528.20,649.28 v4.1 M528.20,650.68 a1.2,1.25 0 1 1 2.4,0 a1.2,1.25 0 1 1 -2.4,0" fill="none" stroke="#b589ec" stroke-width="0.9" stroke-linecap="round" stroke-linejoin="round"/>
<path d="M541.30,650.28 v-0.9 a1.1,1.1 0 0 1 2.2,0 v0.5" fill="none" stroke="#57965c" stroke-width="1.0"/>
<rect x="538.45" y="650.33" width="3.7" height="2.5" rx="1" fill="#25332a" stroke="#57965c" stroke-width="1.1"/>
<circle cx="529.35" cy="666.76" r="4.5" fill="#2f2936" stroke="#b589ec" stroke-width="0.85"/>
<path d="M528.20,665.46 v4.1 M528.20,666.86 a1.2,1.25 0 1 1 2.4,0 a1.2,1.25 0 1 1 -2.4,0" fill="none" stroke="#b589ec" stroke-width="0.9" stroke-linecap="round" stroke-linejoin="round"/>
<path d="M541.30,666.46 v-0.9 a1.1,1.1 0 0 1 2.2,0 v0.5" fill="none" stroke="#57965c" stroke-width="1.0"/>
<rect x="538.45" y="666.51" width="3.7" height="2.5" rx="1" fill="#25332a" stroke="#57965c" stroke-width="1.1"/>
<line x1="521.80" x2="735.70" y1="675.61" y2="675.61" stroke="#6d6f70" stroke-width="1.35"/>
<circle cx="529.35" cy="684.41" r="4.5" fill="#402929" stroke="#db5c5c" stroke-width="0.85"/>
<path d="M527.15,686.21 v-3.1 M527.15,684.21 q1.1,-1.8 2.2,0 v2.0 M529.35,684.21 q1.1,-1.8 2.2,0 v2.0" fill="none" stroke="#db5c5c" stroke-width="0.8" stroke-linecap="round" stroke-linejoin="round"/>
<path d="M541.30,684.11 v-0.9 a1.1,1.1 0 0 1 2.2,0 v0.5" fill="none" stroke="#57965c" stroke-width="1.0"/>
<rect x="538.45" y="684.16" width="3.7" height="2.5" rx="1" fill="#25332a" stroke="#57965c" stroke-width="1.1"/>
<rect x="521.45" y="586.70" width="214.60" height="107.10" fill="none" stroke="#727272" stroke-width="1.3"/>
<rect x="61.00" y="933.45" width="110.10" height="61.05" fill="none" stroke="#000" stroke-opacity="0.22" stroke-width="1.8"/>
<rect x="62.20" y="934.65" width="107.70" height="58.65" fill="#3c3f41"/>
<rect x="62.20" y="934.65" width="107.70" height="19.45" fill="#404040"/>
<circle cx="95.00" cy="944.65" r="4.5" fill="#222b3f" stroke="#5183ea" stroke-width="0.85"/>
<path d="M96.50,943.35 a2.0,2.0 0 1 0 0,2.6" fill="none" stroke="#5183ea" stroke-width="0.85" stroke-linecap="round" stroke-linejoin="round"/>
<path d="M96.20,939.25 l4.2,2.6 l-4.2,2.6 z" fill="#57965c" stroke="#404040" stroke-width="0.6"/>
<path d="M107.20,944.35 v-0.9 a1.1,1.1 0 0 1 2.2,0 v0.5" fill="none" stroke="#57965c" stroke-width="1.0"/>
<rect x="104.35" y="944.40" width="3.7" height="2.5" rx="1" fill="#25332a" stroke="#57965c" stroke-width="1.1"/>
<line x1="62.90" x2="169.20" y1="954.10" y2="954.10" stroke="#6d6f70" stroke-width="1.35"/>
<circle cx="70.45" cy="965.20" r="4.5" fill="#402929" stroke="#db5c5c" stroke-width="0.85"/>
<path d="M68.25,967.00 v-3.1 M68.25,965.00 q1.1,-1.8 2.2,0 v2.0 M70.45,965.00 q1.1,-1.8 2.2,0 v2.0" fill="none" stroke="#db5c5c" stroke-width="0.8" stroke-linecap="round" stroke-linejoin="round"/>
<path d="M67.45,965.60 m0,-0.35 l2.55,2.55 l-2.55,2.55 l-2.55,-2.55 z" fill="#3c3f41" stroke="#d5d7dc" stroke-width="1.0"/>
<path d="M82.40,964.90 v-0.9 a1.1,1.1 0 0 1 2.2,0 v0.5" fill="none" stroke="#57965c" stroke-width="1.0"/>
<rect x="79.55" y="964.95" width="3.7" height="2.5" rx="1" fill="#25332a" stroke="#57965c" stroke-width="1.1"/>
<line x1="62.90" x2="169.20" y1="974.05" y2="974.05" stroke="#6d6f70" stroke-width="1.35"/>
<circle cx="70.45" cy="982.85" r="4.5" fill="#402929" stroke="#db5c5c" stroke-width="0.85"/>
<path d="M68.25,984.65 v-3.1 M68.25,982.65 q1.1,-1.8 2.2,0 v2.0 M70.45,982.65 q1.1,-1.8 2.2,0 v2.0" fill="none" stroke="#db5c5c" stroke-width="0.8" stroke-linecap="round" stroke-linejoin="round"/>
<path d="M82.40,982.55 v-0.9 a1.1,1.1 0 0 1 2.2,0 v0.5" fill="none" stroke="#57965c" stroke-width="1.0"/>
<rect x="79.55" y="982.60" width="3.7" height="2.5" rx="1" fill="#25332a" stroke="#57965c" stroke-width="1.1"/>
<rect x="62.55" y="935.00" width="107.00" height="57.95" fill="none" stroke="#727272" stroke-width="1.3"/>
<g opacity="0.99">
<text x="249.30" y="200.90" font-size="8.0" fill="#c6c6c6" stroke="#c6c6c6" stroke-width="0.2" text-anchor="start">«create»</text>
<text x="83.80" y="825.80" font-size="8.0" fill="#c6c6c6" stroke="#c6c6c6" stroke-width="0.2" text-anchor="start">«create»</text>
<text x="228.80" y="906.80" font-size="8.0" fill="#c6c6c6" stroke="#c6c6c6" stroke-width="0.2" text-anchor="start">«create»</text>
<text x="357.00" y="906.80" font-size="8.0" fill="#c6c6c6" stroke="#c6c6c6" stroke-width="0.2" text-anchor="start">«create»</text>
<text x="426.70" y="906.50" font-size="8.0" fill="#c6c6c6" stroke="#c6c6c6" stroke-width="0.2" text-anchor="start">«create»</text>
<text x="388.00" y="205.20" font-size="8.0" fill="#c6c6c6" stroke="#c6c6c6" stroke-width="0.2" text-anchor="start">1</text>
<text x="405.00" y="204.00" font-size="8.0" fill="#c6c6c6" stroke="#c6c6c6" stroke-width="0.2" text-anchor="start">*</text>
<text x="416.70" y="211.60" font-size="8.0" fill="#c6c6c6" stroke="#c6c6c6" stroke-width="0.2" text-anchor="start">cargoItems</text>
<text x="185.00" y="373.30" font-size="8.0" fill="#c6c6c6" stroke="#c6c6c6" stroke-width="0.2" text-anchor="start">cargo</text>
<text x="212.60" y="394.00" font-size="8.0" fill="#c6c6c6" stroke="#c6c6c6" stroke-width="0.2" text-anchor="start">1</text>
<text x="244.40" y="394.00" font-size="8.0" fill="#c6c6c6" stroke="#c6c6c6" stroke-width="0.2" text-anchor="start">1</text>
<text x="318.40" y="28.10" font-size="10.8" fill="#ced0d6" stroke="#ced0d6" stroke-width="0.22" text-anchor="start">CargoItem</text>
<text x="259.15" y="48.30" font-size="8.76" fill="#c77dbb" stroke="#c77dbb" stroke-width="0.22" text-anchor="start" letter-spacing="-0.125">rate</text>
<text x="426.23" y="48.30" font-size="8.76" fill="#cf8e6d" stroke="#cf8e6d" stroke-width="0.22" text-anchor="end" letter-spacing="0.133">double</text>
<text x="259.15" y="64.48" font-size="8.76" fill="#c77dbb" stroke="#c77dbb" stroke-width="0.22" text-anchor="start" letter-spacing="-0.150">name</text>
<text x="426.10" y="64.48" font-size="8.76" fill="#bcbec4" stroke="#bcbec4" stroke-width="0.22" text-anchor="end">String</text>
<text x="259.15" y="80.66" font-size="8.76" fill="#c77dbb" stroke="#c77dbb" stroke-width="0.22" text-anchor="start" letter-spacing="-0.100">cost</text>
<text x="426.23" y="80.66" font-size="8.76" fill="#cf8e6d" stroke="#cf8e6d" stroke-width="0.22" text-anchor="end" letter-spacing="0.133">double</text>
<text x="259.15" y="96.84" font-size="8.76" fill="#c77dbb" stroke="#c77dbb" stroke-width="0.22" text-anchor="start">chargeableWeight</text>
<text x="426.23" y="96.84" font-size="8.76" fill="#cf8e6d" stroke="#cf8e6d" stroke-width="0.22" text-anchor="end" letter-spacing="0.133">double</text>
<text x="259.15" y="114.49" font-size="8.76" fill="#c77dbb" stroke="#c77dbb" stroke-width="0.22" text-anchor="start" letter-spacing="-0.150">name</text>
<text x="426.10" y="114.49" font-size="8.76" fill="#bcbec4" stroke="#bcbec4" stroke-width="0.22" text-anchor="end">String</text>
<text x="259.15" y="130.67" font-size="8.76" fill="#c77dbb" stroke="#c77dbb" stroke-width="0.22" text-anchor="start">chargeableWeight</text>
<text x="426.23" y="130.67" font-size="8.76" fill="#cf8e6d" stroke="#cf8e6d" stroke-width="0.22" text-anchor="end" letter-spacing="0.133">double</text>
<text x="259.15" y="146.85" font-size="8.76" fill="#c77dbb" stroke="#c77dbb" stroke-width="0.22" text-anchor="start" letter-spacing="-0.100">cost</text>
<text x="426.23" y="146.85" font-size="8.76" fill="#cf8e6d" stroke="#cf8e6d" stroke-width="0.22" text-anchor="end" letter-spacing="0.133">double</text>
<text x="259.15" y="163.03" font-size="8.76" fill="#c77dbb" stroke="#c77dbb" stroke-width="0.22" text-anchor="start" letter-spacing="-0.125">rate</text>
<text x="426.23" y="163.03" font-size="8.76" fill="#cf8e6d" stroke="#cf8e6d" stroke-width="0.22" text-anchor="end" letter-spacing="0.133">double</text>
<text x="259.15" y="180.68" font-size="8.76" fill="#56a8f5" stroke="#56a8f5" stroke-width="0.22" text-anchor="start">CargoItem</text>
<text x="301.25" y="180.68" font-size="8.76" fill="#bcbec4" stroke="#bcbec4" stroke-width="0.22" text-anchor="start">(</text>
<text x="304.36" y="180.68" font-size="8.76" fill="#bcbec4" stroke="#bcbec4" stroke-width="0.22" text-anchor="start">String</text>
<text x="327.25" y="180.68" font-size="8.76" fill="#bcbec4" stroke="#bcbec4" stroke-width="0.22" text-anchor="start">,</text>
<text x="332.47" y="180.68" font-size="8.76" fill="#bcbec4" stroke="#bcbec4" stroke-width="0.22" text-anchor="start">String</text>
<text x="355.35" y="180.68" font-size="8.76" fill="#bcbec4" stroke="#bcbec4" stroke-width="0.22" text-anchor="start">,</text>
<text x="360.58" y="180.68" font-size="8.76" fill="#cf8e6d" stroke="#cf8e6d" stroke-width="0.22" text-anchor="start" letter-spacing="0.133">double</text>
<text x="387.98" y="180.68" font-size="8.76" fill="#bcbec4" stroke="#bcbec4" stroke-width="0.22" text-anchor="start">,</text>
<text x="392.95" y="180.68" font-size="8.76" fill="#cf8e6d" stroke="#cf8e6d" stroke-width="0.22" text-anchor="start" letter-spacing="0.133">double</text>
<text x="420.65" y="180.68" font-size="8.76" fill="#bcbec4" stroke="#bcbec4" stroke-width="0.22" text-anchor="start">)</text>
<text x="342.60" y="270.55" font-size="10.8" fill="#ced0d6" stroke="#ced0d6" stroke-width="0.22" text-anchor="start">Cargo</text>
<text x="232.80" y="290.85" font-size="8.76" fill="#c77dbb" stroke="#c77dbb" stroke-width="0.22" text-anchor="start">cargoItems</text>
<text x="413.50" y="290.85" font-size="8.76" fill="#bcbec4" stroke="#bcbec4" stroke-width="0.22" text-anchor="start">List</text>
<text x="427.50" y="290.85" font-size="8.76" fill="#bcbec4" stroke="#bcbec4" stroke-width="0.22" text-anchor="start">&lt;</text>
<text x="432.50" y="290.85" font-size="8.76" fill="#bcbec4" stroke="#bcbec4" stroke-width="0.22" text-anchor="start">CargoItem</text>
<text x="474.90" y="290.85" font-size="8.76" fill="#bcbec4" stroke="#bcbec4" stroke-width="0.22" text-anchor="start">&gt;</text>
<text x="232.80" y="308.50" font-size="8.76" fill="#c77dbb" stroke="#c77dbb" stroke-width="0.22" text-anchor="start">cargoItems</text>
<text x="413.50" y="308.50" font-size="8.76" fill="#bcbec4" stroke="#bcbec4" stroke-width="0.22" text-anchor="start">List</text>
<text x="427.50" y="308.50" font-size="8.76" fill="#bcbec4" stroke="#bcbec4" stroke-width="0.22" text-anchor="start">&lt;</text>
<text x="432.50" y="308.50" font-size="8.76" fill="#bcbec4" stroke="#bcbec4" stroke-width="0.22" text-anchor="start">CargoItem</text>
<text x="474.90" y="308.50" font-size="8.76" fill="#bcbec4" stroke="#bcbec4" stroke-width="0.22" text-anchor="start">&gt;</text>
<text x="232.80" y="326.15" font-size="8.76" fill="#56a8f5" stroke="#56a8f5" stroke-width="0.22" text-anchor="start" letter-spacing="-0.175">addCargo</text>
<text x="272.28" y="326.15" font-size="8.76" fill="#bcbec4" stroke="#bcbec4" stroke-width="0.22" text-anchor="start">(</text>
<text x="275.39" y="326.15" font-size="8.76" fill="#bcbec4" stroke="#bcbec4" stroke-width="0.22" text-anchor="start">String</text>
<text x="298.28" y="326.15" font-size="8.76" fill="#bcbec4" stroke="#bcbec4" stroke-width="0.22" text-anchor="start">,</text>
<text x="303.50" y="326.15" font-size="8.76" fill="#bcbec4" stroke="#bcbec4" stroke-width="0.22" text-anchor="start">String</text>
<text x="326.38" y="326.15" font-size="8.76" fill="#bcbec4" stroke="#bcbec4" stroke-width="0.22" text-anchor="start">,</text>
<text x="331.61" y="326.15" font-size="8.76" fill="#cf8e6d" stroke="#cf8e6d" stroke-width="0.22" text-anchor="start" letter-spacing="0.133">double</text>
<text x="359.01" y="326.15" font-size="8.76" fill="#bcbec4" stroke="#bcbec4" stroke-width="0.22" text-anchor="start">,</text>
<text x="363.98" y="326.15" font-size="8.76" fill="#cf8e6d" stroke="#cf8e6d" stroke-width="0.22" text-anchor="start" letter-spacing="0.133">double</text>
<text x="391.38" y="326.15" font-size="8.76" fill="#bcbec4" stroke="#bcbec4" stroke-width="0.22" text-anchor="start">,</text>
<text x="396.35" y="326.15" font-size="8.76" fill="#cf8e6d" stroke="#cf8e6d" stroke-width="0.22" text-anchor="start" letter-spacing="0.133">double</text>
<text x="423.75" y="326.15" font-size="8.76" fill="#bcbec4" stroke="#bcbec4" stroke-width="0.22" text-anchor="start">,</text>
<text x="428.72" y="326.15" font-size="8.76" fill="#cf8e6d" stroke="#cf8e6d" stroke-width="0.22" text-anchor="start" letter-spacing="0.133">double</text>
<text x="456.42" y="326.15" font-size="8.76" fill="#bcbec4" stroke="#bcbec4" stroke-width="0.22" text-anchor="start">)</text>
<text x="480.10" y="326.15" font-size="8.76" fill="#cf8e6d" stroke="#cf8e6d" stroke-width="0.22" text-anchor="end">void</text>
<text x="232.80" y="343.80" font-size="8.76" fill="#56a8f5" stroke="#56a8f5" stroke-width="0.22" text-anchor="start" letter-spacing="-0.200">Cargo</text>
<text x="256.86" y="343.80" font-size="8.76" fill="#bcbec4" stroke="#bcbec4" stroke-width="0.22" text-anchor="start">(</text>
<text x="259.98" y="343.80" font-size="8.76" fill="#bcbec4" stroke="#bcbec4" stroke-width="0.22" text-anchor="start">String</text>
<text x="282.86" y="343.80" font-size="8.76" fill="#bcbec4" stroke="#bcbec4" stroke-width="0.22" text-anchor="start">,</text>
<text x="288.08" y="343.80" font-size="8.76" fill="#cf8e6d" stroke="#cf8e6d" stroke-width="0.22" text-anchor="start" letter-spacing="0.100">int</text>
<text x="298.24" y="343.80" font-size="8.76" fill="#bcbec4" stroke="#bcbec4" stroke-width="0.22" text-anchor="start">)</text>
<text x="369.60" y="429.85" font-size="10.8" fill="#ced0d6" stroke="#ced0d6" stroke-width="0.22" text-anchor="start">Order</text>
<g clip-path="url(#clipOrder)">
<text x="277.25" y="450.10" font-size="8.76" fill="#c77dbb" stroke="#c77dbb" stroke-width="0.22" text-anchor="start" letter-spacing="-0.091">senderPhone</text>
<text x="488.80" y="450.10" font-size="8.76" fill="#bcbec4" stroke="#bcbec4" stroke-width="0.22" text-anchor="end">String</text>
<text x="277.25" y="466.28" font-size="8.76" fill="#c77dbb" stroke="#c77dbb" stroke-width="0.22" text-anchor="start" letter-spacing="0.136">totalWeight</text>
<text x="488.93" y="466.28" font-size="8.76" fill="#cf8e6d" stroke="#cf8e6d" stroke-width="0.22" text-anchor="end" letter-spacing="0.133">double</text>
<text x="277.25" y="482.46" font-size="8.76" fill="#c77dbb" stroke="#c77dbb" stroke-width="0.22" text-anchor="start" letter-spacing="-0.115">senderAddress</text>
<text x="488.80" y="482.46" font-size="8.76" fill="#bcbec4" stroke="#bcbec4" stroke-width="0.22" text-anchor="end">String</text>
<text x="277.25" y="498.64" font-size="8.76" fill="#c77dbb" stroke="#c77dbb" stroke-width="0.22" text-anchor="start" letter-spacing="-0.080">senderName</text>
<text x="488.80" y="498.64" font-size="8.76" fill="#bcbec4" stroke="#bcbec4" stroke-width="0.22" text-anchor="end">String</text>
<text x="277.25" y="514.82" font-size="8.76" fill="#c77dbb" stroke="#c77dbb" stroke-width="0.22" text-anchor="start">orderDate</text>
<text x="488.80" y="514.82" font-size="8.76" fill="#bcbec4" stroke="#bcbec4" stroke-width="0.22" text-anchor="end">String</text>
<text x="277.25" y="531.00" font-size="8.76" fill="#c77dbb" stroke="#c77dbb" stroke-width="0.22" text-anchor="start">recipientAddress</text>
<text x="488.80" y="531.00" font-size="8.76" fill="#bcbec4" stroke="#bcbec4" stroke-width="0.22" text-anchor="end">String</text>
<text x="277.25" y="547.18" font-size="8.76" fill="#c77dbb" stroke="#c77dbb" stroke-width="0.22" text-anchor="start">recipientPhone</text>
<text x="488.80" y="547.18" font-size="8.76" fill="#bcbec4" stroke="#bcbec4" stroke-width="0.22" text-anchor="end">String</text>
<text x="277.25" y="563.36" font-size="8.76" fill="#c77dbb" stroke="#c77dbb" stroke-width="0.22" text-anchor="start" letter-spacing="0.131">paymentMethod</text>
<text x="488.80" y="563.36" font-size="8.76" fill="#bcbec4" stroke="#bcbec4" stroke-width="0.22" text-anchor="end">String</text>
<text x="277.25" y="579.54" font-size="8.76" fill="#c77dbb" stroke="#c77dbb" stroke-width="0.22" text-anchor="start" letter-spacing="-0.100">cargo</text>
<text x="488.60" y="579.54" font-size="8.76" fill="#bcbec4" stroke="#bcbec4" stroke-width="0.22" text-anchor="end" letter-spacing="-0.200">Cargo</text>
<text x="277.25" y="595.72" font-size="8.76" fill="#c77dbb" stroke="#c77dbb" stroke-width="0.22" text-anchor="start">recipientName</text>
<text x="488.80" y="595.72" font-size="8.76" fill="#bcbec4" stroke="#bcbec4" stroke-width="0.22" text-anchor="end">String</text>
<text x="277.25" y="611.90" font-size="8.76" fill="#c77dbb" stroke="#c77dbb" stroke-width="0.22" text-anchor="start">totalCost</text>
<text x="488.93" y="611.90" font-size="8.76" fill="#cf8e6d" stroke="#cf8e6d" stroke-width="0.22" text-anchor="end" letter-spacing="0.133">double</text>
<text x="277.25" y="628.08" font-size="8.76" fill="#c77dbb" stroke="#c77dbb" stroke-width="0.22" text-anchor="start">orderId</text>
<text x="488.80" y="628.08" font-size="8.76" fill="#bcbec4" stroke="#bcbec4" stroke-width="0.22" text-anchor="end">String</text>
<text x="277.25" y="645.73" font-size="8.76" fill="#c77dbb" stroke="#c77dbb" stroke-width="0.22" text-anchor="start" letter-spacing="0.136">totalWeight</text>
<text x="488.93" y="645.73" font-size="8.76" fill="#cf8e6d" stroke="#cf8e6d" stroke-width="0.22" text-anchor="end" letter-spacing="0.133">double</text>
<text x="277.25" y="661.91" font-size="8.76" fill="#c77dbb" stroke="#c77dbb" stroke-width="0.22" text-anchor="start" letter-spacing="-0.091">senderPhone</text>
<text x="488.80" y="661.91" font-size="8.76" fill="#bcbec4" stroke="#bcbec4" stroke-width="0.22" text-anchor="end">String</text>
<text x="277.25" y="678.09" font-size="8.76" fill="#c77dbb" stroke="#c77dbb" stroke-width="0.22" text-anchor="start" letter-spacing="-0.115">senderAddress</text>
<text x="488.80" y="678.09" font-size="8.76" fill="#bcbec4" stroke="#bcbec4" stroke-width="0.22" text-anchor="end">String</text>
<text x="277.25" y="694.27" font-size="8.76" fill="#c77dbb" stroke="#c77dbb" stroke-width="0.22" text-anchor="start">orderId</text>
<text x="488.80" y="694.27" font-size="8.76" fill="#bcbec4" stroke="#bcbec4" stroke-width="0.22" text-anchor="end">String</text>
<text x="277.25" y="710.45" font-size="8.76" fill="#c77dbb" stroke="#c77dbb" stroke-width="0.22" text-anchor="start" letter-spacing="-0.080">senderName</text>
<text x="488.80" y="710.45" font-size="8.76" fill="#bcbec4" stroke="#bcbec4" stroke-width="0.22" text-anchor="end">String</text>
<text x="277.25" y="726.63" font-size="8.76" fill="#c77dbb" stroke="#c77dbb" stroke-width="0.22" text-anchor="start">totalCost</text>
<text x="488.93" y="726.63" font-size="8.76" fill="#cf8e6d" stroke="#cf8e6d" stroke-width="0.22" text-anchor="end" letter-spacing="0.133">double</text>
<text x="277.25" y="742.81" font-size="8.76" fill="#c77dbb" stroke="#c77dbb" stroke-width="0.22" text-anchor="start">recipientPhone</text>
<text x="488.80" y="742.81" font-size="8.76" fill="#bcbec4" stroke="#bcbec4" stroke-width="0.22" text-anchor="end">String</text>
<text x="277.25" y="758.99" font-size="8.76" fill="#c77dbb" stroke="#c77dbb" stroke-width="0.22" text-anchor="start">recipientAddress</text>
<text x="488.80" y="758.99" font-size="8.76" fill="#bcbec4" stroke="#bcbec4" stroke-width="0.22" text-anchor="end">String</text>
<text x="277.25" y="775.17" font-size="8.76" fill="#c77dbb" stroke="#c77dbb" stroke-width="0.22" text-anchor="start" letter-spacing="-0.100">cargo</text>
<text x="488.60" y="775.17" font-size="8.76" fill="#bcbec4" stroke="#bcbec4" stroke-width="0.22" text-anchor="end" letter-spacing="-0.200">Cargo</text>
<text x="277.25" y="791.35" font-size="8.76" fill="#c77dbb" stroke="#c77dbb" stroke-width="0.22" text-anchor="start">orderDate</text>
<text x="488.80" y="791.35" font-size="8.76" fill="#bcbec4" stroke="#bcbec4" stroke-width="0.22" text-anchor="end">String</text>
<text x="277.25" y="807.53" font-size="8.76" fill="#c77dbb" stroke="#c77dbb" stroke-width="0.22" text-anchor="start">recipientName</text>
<text x="488.80" y="807.53" font-size="8.76" fill="#bcbec4" stroke="#bcbec4" stroke-width="0.22" text-anchor="end">String</text>
<text x="277.25" y="823.71" font-size="8.76" fill="#c77dbb" stroke="#c77dbb" stroke-width="0.22" text-anchor="start" letter-spacing="0.131">paymentMethod</text>
<text x="488.80" y="823.71" font-size="8.76" fill="#bcbec4" stroke="#bcbec4" stroke-width="0.22" text-anchor="end">String</text>
<text x="277.25" y="841.36" font-size="8.76" fill="#56a8f5" stroke="#56a8f5" stroke-width="0.22" text-anchor="start" letter-spacing="-0.175">addCargo</text>
<text x="316.73" y="841.36" font-size="8.76" fill="#bcbec4" stroke="#bcbec4" stroke-width="0.22" text-anchor="start">(</text>
<text x="319.84" y="841.36" font-size="8.76" fill="#bcbec4" stroke="#bcbec4" stroke-width="0.22" text-anchor="start" letter-spacing="-0.200">Cargo</text>
<text x="342.70" y="841.36" font-size="8.76" fill="#bcbec4" stroke="#bcbec4" stroke-width="0.22" text-anchor="start">)</text>
<text x="489.55" y="841.36" font-size="8.76" fill="#cf8e6d" stroke="#cf8e6d" stroke-width="0.22" text-anchor="end">void</text>
<text x="277.25" y="859.01" font-size="8.76" fill="#56a8f5" stroke="#56a8f5" stroke-width="0.22" text-anchor="start">Order</text>
<text x="300.84" y="859.01" font-size="8.76" fill="#bcbec4" stroke="#bcbec4" stroke-width="0.22" text-anchor="start">(</text>
<text x="303.96" y="859.01" font-size="8.76" fill="#bcbec4" stroke="#bcbec4" stroke-width="0.22" text-anchor="start">String</text>
<text x="326.84" y="859.01" font-size="8.76" fill="#bcbec4" stroke="#bcbec4" stroke-width="0.22" text-anchor="start">,</text>
<text x="332.07" y="859.01" font-size="8.76" fill="#bcbec4" stroke="#bcbec4" stroke-width="0.22" text-anchor="start">String</text>
<text x="354.95" y="859.01" font-size="8.76" fill="#bcbec4" stroke="#bcbec4" stroke-width="0.22" text-anchor="start">,</text>
<text x="360.17" y="859.01" font-size="8.76" fill="#bcbec4" stroke="#bcbec4" stroke-width="0.22" text-anchor="start">String</text>
<text x="383.06" y="859.01" font-size="8.76" fill="#bcbec4" stroke="#bcbec4" stroke-width="0.22" text-anchor="start">,</text>
<text x="388.28" y="859.01" font-size="8.76" fill="#bcbec4" stroke="#bcbec4" stroke-width="0.22" text-anchor="start">String</text>
<text x="411.17" y="859.01" font-size="8.76" fill="#bcbec4" stroke="#bcbec4" stroke-width="0.22" text-anchor="start">,</text>
<text x="416.39" y="859.01" font-size="8.76" fill="#bcbec4" stroke="#bcbec4" stroke-width="0.22" text-anchor="start">String</text>
<text x="439.27" y="859.01" font-size="8.76" fill="#bcbec4" stroke="#bcbec4" stroke-width="0.22" text-anchor="start">,</text>
<text x="444.50" y="859.01" font-size="8.76" fill="#bcbec4" stroke="#bcbec4" stroke-width="0.22" text-anchor="start">String</text>
<text x="467.38" y="859.01" font-size="8.76" fill="#bcbec4" stroke="#bcbec4" stroke-width="0.22" text-anchor="start">,</text>
<text x="472.61" y="859.01" font-size="8.76" fill="#bcbec4" stroke="#bcbec4" stroke-width="0.22" text-anchor="start">String</text>
<text x="495.49" y="859.01" font-size="8.76" fill="#bcbec4" stroke="#bcbec4" stroke-width="0.22" text-anchor="start">,</text>
<text x="500.71" y="859.01" font-size="8.76" fill="#bcbec4" stroke="#bcbec4" stroke-width="0.22" text-anchor="start">String</text>
<text x="523.60" y="859.01" font-size="8.76" fill="#bcbec4" stroke="#bcbec4" stroke-width="0.22" text-anchor="start">,</text>
<text x="528.82" y="859.01" font-size="8.76" fill="#bcbec4" stroke="#bcbec4" stroke-width="0.22" text-anchor="start">String</text>
<text x="551.71" y="859.01" font-size="8.76" fill="#bcbec4" stroke="#bcbec4" stroke-width="0.22" text-anchor="start">,</text>
<text x="556.93" y="859.01" font-size="8.76" fill="#bcbec4" stroke="#bcbec4" stroke-width="0.22" text-anchor="start">String</text>
<text x="579.81" y="859.01" font-size="8.76" fill="#bcbec4" stroke="#bcbec4" stroke-width="0.22" text-anchor="start">,</text>
<text x="585.04" y="859.01" font-size="8.76" fill="#bcbec4" stroke="#bcbec4" stroke-width="0.22" text-anchor="start">String</text>
<text x="607.92" y="859.01" font-size="8.76" fill="#bcbec4" stroke="#bcbec4" stroke-width="0.22" text-anchor="start">,</text>
<text x="613.14" y="859.01" font-size="8.76" fill="#bcbec4" stroke="#bcbec4" stroke-width="0.22" text-anchor="start">String</text>
<text x="636.03" y="859.01" font-size="8.76" fill="#bcbec4" stroke="#bcbec4" stroke-width="0.22" text-anchor="start">)</text>
</g>
<text x="113.60" y="583.55" font-size="10.8" fill="#ced0d6" stroke="#ced0d6" stroke-width="0.22" text-anchor="start">Flight</text>
<text x="40.90" y="603.85" font-size="8.76" fill="#c77dbb" stroke="#c77dbb" stroke-width="0.22" text-anchor="start" letter-spacing="-0.286">maxLoad</text>
<text x="212.68" y="603.85" font-size="8.76" fill="#cf8e6d" stroke="#cf8e6d" stroke-width="0.22" text-anchor="end" letter-spacing="0.133">double</text>
<text x="40.90" y="620.03" font-size="8.76" fill="#c77dbb" stroke="#c77dbb" stroke-width="0.22" text-anchor="start" letter-spacing="0.142">flightNumber</text>
<text x="212.55" y="620.03" font-size="8.76" fill="#bcbec4" stroke="#bcbec4" stroke-width="0.22" text-anchor="end">String</text>
<text x="40.90" y="637.68" font-size="8.76" fill="#c77dbb" stroke="#c77dbb" stroke-width="0.22" text-anchor="start" letter-spacing="-0.286">maxLoad</text>
<text x="212.68" y="637.68" font-size="8.76" fill="#cf8e6d" stroke="#cf8e6d" stroke-width="0.22" text-anchor="end" letter-spacing="0.133">double</text>
<text x="40.90" y="653.86" font-size="8.76" fill="#c77dbb" stroke="#c77dbb" stroke-width="0.22" text-anchor="start" letter-spacing="0.142">flightNumber</text>
<text x="212.55" y="653.86" font-size="8.76" fill="#bcbec4" stroke="#bcbec4" stroke-width="0.22" text-anchor="end">String</text>
<text x="40.90" y="671.51" font-size="8.76" fill="#56a8f5" stroke="#56a8f5" stroke-width="0.22" text-anchor="start" letter-spacing="-0.243">addLoad</text>
<text x="75.50" y="671.51" font-size="8.76" fill="#bcbec4" stroke="#bcbec4" stroke-width="0.22" text-anchor="start">(</text>
<text x="78.62" y="671.51" font-size="8.76" fill="#cf8e6d" stroke="#cf8e6d" stroke-width="0.22" text-anchor="start" letter-spacing="0.133">double</text>
<text x="106.33" y="671.51" font-size="8.76" fill="#bcbec4" stroke="#bcbec4" stroke-width="0.22" text-anchor="start">)</text>
<text x="213.30" y="671.51" font-size="8.76" fill="#cf8e6d" stroke="#cf8e6d" stroke-width="0.22" text-anchor="end">void</text>
<text x="40.90" y="687.69" font-size="8.76" fill="#56a8f5" stroke="#56a8f5" stroke-width="0.22" text-anchor="start" letter-spacing="-0.300">canCarry</text>
<text x="75.54" y="687.69" font-size="8.76" fill="#bcbec4" stroke="#bcbec4" stroke-width="0.22" text-anchor="start">(</text>
<text x="78.65" y="687.69" font-size="8.76" fill="#cf8e6d" stroke="#cf8e6d" stroke-width="0.22" text-anchor="start" letter-spacing="0.133">double</text>
<text x="106.36" y="687.69" font-size="8.76" fill="#bcbec4" stroke="#bcbec4" stroke-width="0.22" text-anchor="start">)</text>
<text x="212.55" y="687.69" font-size="8.76" fill="#cf8e6d" stroke="#cf8e6d" stroke-width="0.22" text-anchor="end">boolean</text>
<text x="40.90" y="705.34" font-size="8.76" fill="#56a8f5" stroke="#56a8f5" stroke-width="0.22" text-anchor="start">Flight</text>
<text x="63.52" y="705.34" font-size="8.76" fill="#bcbec4" stroke="#bcbec4" stroke-width="0.22" text-anchor="start">(</text>
<text x="66.64" y="705.34" font-size="8.76" fill="#bcbec4" stroke="#bcbec4" stroke-width="0.22" text-anchor="start">String</text>
<text x="89.52" y="705.34" font-size="8.76" fill="#bcbec4" stroke="#bcbec4" stroke-width="0.22" text-anchor="start">,</text>
<text x="94.75" y="705.34" font-size="8.76" fill="#bcbec4" stroke="#bcbec4" stroke-width="0.22" text-anchor="start">String</text>
<text x="117.63" y="705.34" font-size="8.76" fill="#bcbec4" stroke="#bcbec4" stroke-width="0.22" text-anchor="start">,</text>
<text x="122.85" y="705.34" font-size="8.76" fill="#bcbec4" stroke="#bcbec4" stroke-width="0.22" text-anchor="start">String</text>
<text x="145.74" y="705.34" font-size="8.76" fill="#bcbec4" stroke="#bcbec4" stroke-width="0.22" text-anchor="start">,</text>
<text x="150.96" y="705.34" font-size="8.76" fill="#bcbec4" stroke="#bcbec4" stroke-width="0.22" text-anchor="start">String</text>
<text x="173.85" y="705.34" font-size="8.76" fill="#bcbec4" stroke="#bcbec4" stroke-width="0.22" text-anchor="start">,</text>
<text x="179.07" y="705.34" font-size="8.76" fill="#cf8e6d" stroke="#cf8e6d" stroke-width="0.22" text-anchor="start" letter-spacing="0.133">double</text>
<text x="206.78" y="705.34" font-size="8.76" fill="#bcbec4" stroke="#bcbec4" stroke-width="0.22" text-anchor="start">)</text>
<text x="617.00" y="600.17" font-size="10.8" fill="#ced0d6" stroke="#ced0d6" stroke-width="0.22" text-anchor="start">Customer</text>
<text x="547.75" y="620.35" font-size="8.76" fill="#c77dbb" stroke="#c77dbb" stroke-width="0.22" text-anchor="start">phone</text>
<text x="731.05" y="620.35" font-size="8.76" fill="#bcbec4" stroke="#bcbec4" stroke-width="0.22" text-anchor="end">String</text>
<text x="547.75" y="636.53" font-size="8.76" fill="#c77dbb" stroke="#c77dbb" stroke-width="0.22" text-anchor="start" letter-spacing="-0.150">name</text>
<text x="731.05" y="636.53" font-size="8.76" fill="#bcbec4" stroke="#bcbec4" stroke-width="0.22" text-anchor="end">String</text>
<text x="547.75" y="654.18" font-size="8.76" fill="#c77dbb" stroke="#c77dbb" stroke-width="0.22" text-anchor="start" letter-spacing="-0.150">name</text>
<text x="731.05" y="654.18" font-size="8.76" fill="#bcbec4" stroke="#bcbec4" stroke-width="0.22" text-anchor="end">String</text>
<text x="547.75" y="670.36" font-size="8.76" fill="#c77dbb" stroke="#c77dbb" stroke-width="0.22" text-anchor="start">phone</text>
<text x="731.05" y="670.36" font-size="8.76" fill="#bcbec4" stroke="#bcbec4" stroke-width="0.22" text-anchor="end">String</text>
<text x="547.75" y="688.01" font-size="8.76" fill="#56a8f5" stroke="#56a8f5" stroke-width="0.22" text-anchor="start" letter-spacing="-0.175">Customer</text>
<text x="586.52" y="688.01" font-size="8.76" fill="#bcbec4" stroke="#bcbec4" stroke-width="0.22" text-anchor="start">(</text>
<text x="589.64" y="688.01" font-size="8.76" fill="#bcbec4" stroke="#bcbec4" stroke-width="0.22" text-anchor="start">String</text>
<text x="612.52" y="688.01" font-size="8.76" fill="#bcbec4" stroke="#bcbec4" stroke-width="0.22" text-anchor="start">,</text>
<text x="617.75" y="688.01" font-size="8.76" fill="#bcbec4" stroke="#bcbec4" stroke-width="0.22" text-anchor="start">String</text>
<text x="640.63" y="688.01" font-size="8.76" fill="#bcbec4" stroke="#bcbec4" stroke-width="0.22" text-anchor="start">,</text>
<text x="645.85" y="688.01" font-size="8.76" fill="#bcbec4" stroke="#bcbec4" stroke-width="0.22" text-anchor="start">String</text>
<text x="668.74" y="688.01" font-size="8.76" fill="#bcbec4" stroke="#bcbec4" stroke-width="0.22" text-anchor="start">,</text>
<text x="673.96" y="688.01" font-size="8.76" fill="#bcbec4" stroke="#bcbec4" stroke-width="0.22" text-anchor="start">String</text>
<text x="696.84" y="688.01" font-size="8.76" fill="#bcbec4" stroke="#bcbec4" stroke-width="0.22" text-anchor="start">,</text>
<text x="702.07" y="688.01" font-size="8.76" fill="#bcbec4" stroke="#bcbec4" stroke-width="0.22" text-anchor="start">String</text>
<text x="724.95" y="688.01" font-size="8.76" fill="#bcbec4" stroke="#bcbec4" stroke-width="0.22" text-anchor="start">)</text>
<text x="115.20" y="948.55" font-size="10.8" fill="#ced0d6" stroke="#ced0d6" stroke-width="0.22" text-anchor="start">Main</text>
<text x="88.85" y="968.80" font-size="8.76" fill="#56a8f5" stroke="#56a8f5" stroke-width="0.22" text-anchor="start" letter-spacing="-0.150">main</text>
<text x="108.04" y="968.80" font-size="8.76" fill="#bcbec4" stroke="#bcbec4" stroke-width="0.22" text-anchor="start">(</text>
<text x="111.15" y="968.80" font-size="8.76" fill="#bcbec4" stroke="#bcbec4" stroke-width="0.22" text-anchor="start">String</text>
<text x="135.24" y="968.80" font-size="8.76" fill="#bcbec4" stroke="#bcbec4" stroke-width="0.22" text-anchor="start">[]</text>
<text x="141.01" y="968.80" font-size="8.76" fill="#bcbec4" stroke="#bcbec4" stroke-width="0.22" text-anchor="start">)</text>
<text x="165.30" y="968.80" font-size="8.76" fill="#cf8e6d" stroke="#cf8e6d" stroke-width="0.22" text-anchor="end">void</text>
<text x="88.85" y="986.45" font-size="8.76" fill="#56a8f5" stroke="#56a8f5" stroke-width="0.22" text-anchor="start">Main</text>
<text x="109.04" y="986.45" font-size="8.76" fill="#bcbec4" stroke="#bcbec4" stroke-width="0.22" text-anchor="start">(</text>
<text x="111.95" y="986.45" font-size="8.76" fill="#bcbec4" stroke="#bcbec4" stroke-width="0.22" text-anchor="start">)</text>
</g>
</svg>
</body></html>
